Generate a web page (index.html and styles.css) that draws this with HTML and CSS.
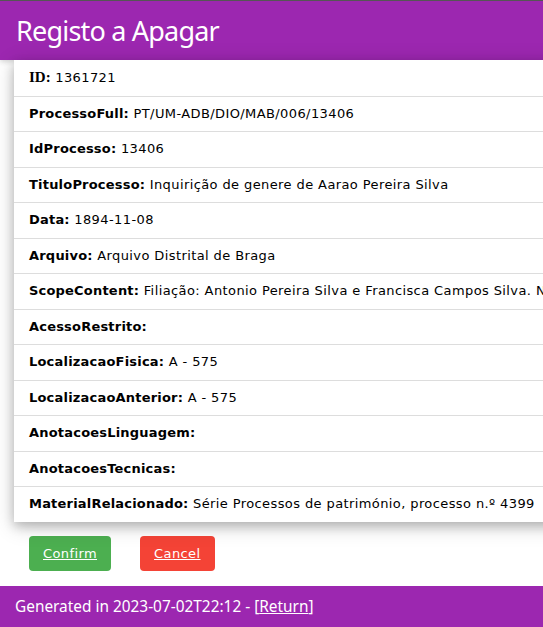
FILE: index.html
```html
<!DOCTYPE html>
<html lang="pt">
<head>
<meta charset="utf-8">
<title>Registo a Apagar</title>
<link rel="stylesheet" href="styles.css">
</head>
<body>
<header class="topbar">
  <h2 class="title">Registo a Apagar</h2>
</header>
<main class="main">
  <ul class="card">
    <li class="row"><b class="lbl-serif">ID:</b> 1361721</li>
    <li class="row"><b>ProcessoFull:</b> PT/UM-ADB/DIO/MAB/006/13406</li>
    <li class="row"><b>IdProcesso:</b> 13406</li>
    <li class="row"><b>TituloProcesso:</b> Inquirição de genere de Aarao Pereira Silva</li>
    <li class="row"><b>Data:</b> 1894-11-08</li>
    <li class="row"><b>Arquivo:</b> Arquivo Distrital de Braga</li>
    <li class="row"><b>ScopeContent:</b> Filiação: Antonio Pereira Silva e Francisca Campos Silva. Naturalidade: Braga.</li>
    <li class="row"><b>AcessoRestrito:</b></li>
    <li class="row"><b>LocalizacaoFisica:</b> A - 575</li>
    <li class="row"><b>LocalizacaoAnterior:</b> A - 575</li>
    <li class="row"><b>AnotacoesLinguagem:</b></li>
    <li class="row"><b>AnotacoesTecnicas:</b></li>
    <li class="row last"><b>MaterialRelacionado:</b> Série Processos de património, processo n.º 4399</li>
  </ul>
  <div class="actions">
    <a class="btn btn-green" href="#">Confirm</a>
    <a class="btn btn-red" href="#">Cancel</a>
  </div>
</main>
<footer class="footer">
  <p class="ftext">Generated in 2023-07-02T22:12 - [<a class="flink" href="#">Return</a>]</p>
</footer>
</body>
</html>
```
FILE: styles.css
```css
html, body {
  margin: 0;
  padding: 0;
  overflow: hidden;
}
body {
  font-family: "DejaVu Sans", Verdana, sans-serif;
  font-size: 13px;
  letter-spacing: 0.4px;
  color: #000;
  background: #fff;
  width: 543px;
  height: 627px;
  display: flex;
  flex-direction: column;
}
b {
  letter-spacing: 0.2px;
}
.topbar {
  background: #9c27b0;
  border-top: 1px solid #555;
  height: 59px;
  padding: 0 16px;
  display: flex;
  align-items: center;
  box-shadow: 0 2px 5px rgba(0,0,0,0.16);
  position: relative;
  z-index: 1;
}
.title {
  margin: 0;
  color: #fff;
  font-family: "Noto Sans", "Open Sans", sans-serif;
  font-weight: 400;
  font-size: 27px;
  letter-spacing: -0.8px;
  line-height: 1;
}
.main {
  flex: 1;
}
.card {
  list-style: none;
  margin: 0 0 0 14px;
  padding: 0;
  width: max-content;
  white-space: nowrap;
  background: #fff;
  box-shadow: 0 4px 10px 0 rgba(0,0,0,0.2), 0 4px 20px 0 rgba(0,0,0,0.19);
  position: relative;
  z-index: 2;
}
.row {
  padding: 8px 16px 8px 15px;
  line-height: 18.5px;
  border-bottom: 1px solid #ddd;
}
.row.last {
  border-bottom: none;
}
.lbl-serif {
  font-family: "Liberation Serif", "Times New Roman", serif;
  font-size: 15px;
  letter-spacing: 0;
}
.actions {
  display: flex;
  gap: 29px;
  padding: 14px 0 0 29px;
}
.btn {
  display: inline-block;
  color: #fff;
  text-decoration: underline;
  padding: 8px 14px;
  line-height: 19px;
  border-radius: 4px;
  letter-spacing: 0.4px;
}
.btn-green { background: #4caf50; }
.btn-red { background: #f44336; }
.footer {
  background: #9c27b0;
  color: #fff;
  height: 41px;
  padding: 0 15px;
  display: flex;
  align-items: center;
  font-family: "Noto Sans", "Open Sans", sans-serif;
  font-size: 15.4px;
  letter-spacing: 0;
}
.ftext {
  margin: 0;
  white-space: nowrap;
}
.flink {
  color: #fff;
  text-decoration: underline;
}
```
